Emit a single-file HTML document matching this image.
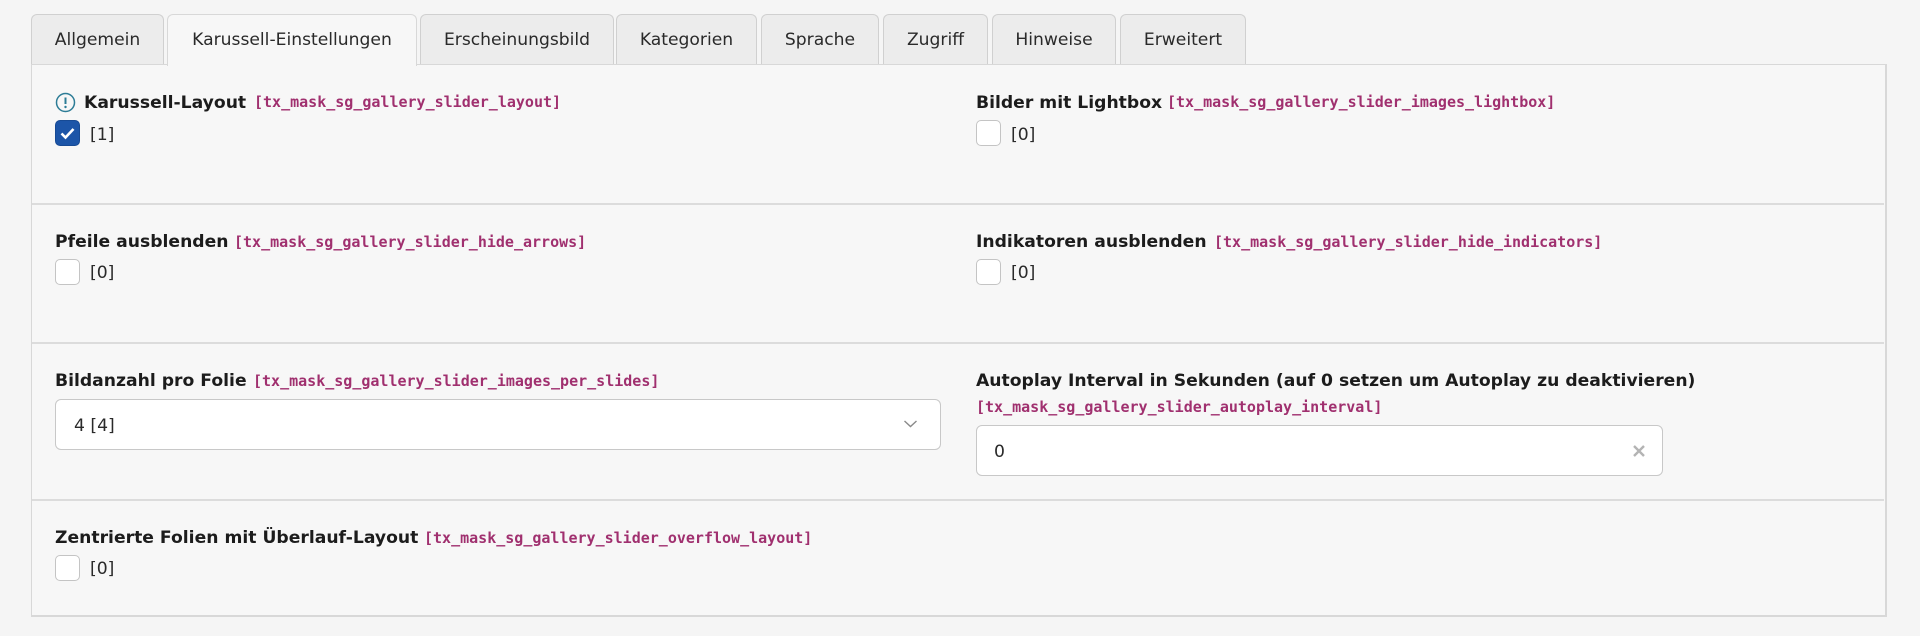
<!DOCTYPE html>
<html lang="de">
<head>
<meta charset="utf-8">
<title>Karussell-Einstellungen</title>
<style>
html,body{margin:0;padding:0;width:1920px;height:636px;overflow:hidden;background:#f5f5f5;}
body{position:relative;font-family:"DejaVu Sans","Liberation Sans",sans-serif;color:#1c1c1c;}
.abs,.tab,.line,.lab,.mono,.cb,.val{position:absolute;}
.panel{position:absolute;left:31px;top:64px;width:1853px;height:550px;background:#f7f7f7;border:1px solid #d8d8d8;border-width:1px 2px 2px 1px;box-sizing:content-box;}
.tab{top:14px;height:50px;box-sizing:border-box;background:#ececec;border:1.5px solid #d0d0d0;border-bottom:none;border-radius:6px 6px 0 0;text-align:center;font-size:17.15px;line-height:50px;color:#2a2a2a;white-space:nowrap;}
.tab.on{background:#f7f7f7;height:52px;z-index:3;border-color:#d8d8d8;}
.line{left:32px;width:1852px;height:2px;background:#dcdcdc;z-index:1;}
.lab{font-weight:bold;font-size:17.19px;line-height:20px;white-space:nowrap;color:#1c1c1c;z-index:2;}
.mono{font-family:"DejaVu Sans Mono","Liberation Mono",monospace;font-weight:bold;font-size:15px;line-height:20px;color:#a0306f;white-space:nowrap;z-index:2;}
.cb{width:25px;height:26px;box-sizing:border-box;background:#fff;border:1.5px solid #c4c4c4;border-radius:5px;z-index:2;}
.cb.on{background:#1c55a8;border-color:#174a94;}
.val{font-size:17.2px;line-height:20px;color:#2a2a2a;z-index:2;white-space:nowrap;}
.field{position:absolute;box-sizing:border-box;background:#fff;border:1.5px solid #c8c8c8;border-radius:6px;z-index:2;}
</style>
</head>
<body>
<div class="panel"></div>

<div class="tab" style="left:31px;width:133px">Allgemein</div>
<div class="tab on" style="left:167px;width:250px">Karussell-Einstellungen</div>
<div class="tab" style="left:420px;width:194px">Erscheinungsbild</div>
<div class="tab" style="left:616px;width:141px">Kategorien</div>
<div class="tab" style="left:761px;width:118px">Sprache</div>
<div class="tab" style="left:883px;width:105px">Zugriff</div>
<div class="tab" style="left:992px;width:124px">Hinweise</div>
<div class="tab" style="left:1120px;width:126px">Erweitert</div>

<div class="line" style="top:203px"></div>
<div class="line" style="top:342px"></div>
<div class="line" style="top:499px"></div>

<!-- Row 1 -->
<svg class="abs" style="left:55px;top:92px;z-index:2" width="21" height="21" viewBox="0 0 21 21"><circle cx="10.5" cy="10.5" r="9" fill="none" stroke="#2c7c96" stroke-width="1.5"/><path d="M10.5 5.5v6.5" stroke="#2c7c96" stroke-width="2" fill="none"/><circle cx="10.5" cy="15" r="1.2" fill="#2c7c96"/></svg>
<div class="lab" style="left:84px;top:93px">Karussell-Layout</div>
<div class="mono" style="left:254px;top:92px">[tx_mask_sg_gallery_slider_layout]</div>
<div class="cb on" style="left:55px;top:120px"></div>
<svg class="abs" style="left:55px;top:120px;z-index:3" width="25" height="26" viewBox="0 0 25 26"><path d="M6.5 13.5l4 4 8-8.5" fill="none" stroke="#fff" stroke-width="2.6"/></svg>
<div class="val" style="left:90px;top:125px">[1]</div>

<div class="lab" style="left:976px;top:93px">Bilder mit Lightbox</div>
<div class="mono" style="left:1167px;top:92px">[tx_mask_sg_gallery_slider_images_lightbox]</div>
<div class="cb" style="left:976px;top:120px"></div>
<div class="val" style="left:1011px;top:125px">[0]</div>

<!-- Row 2 -->
<div class="lab" style="left:55px;top:232px">Pfeile ausblenden</div>
<div class="mono" style="left:234px;top:232px">[tx_mask_sg_gallery_slider_hide_arrows]</div>
<div class="cb" style="left:55px;top:259px"></div>
<div class="val" style="left:90px;top:263px">[0]</div>

<div class="lab" style="left:976px;top:232px">Indikatoren ausblenden</div>
<div class="mono" style="left:1214px;top:232px">[tx_mask_sg_gallery_slider_hide_indicators]</div>
<div class="cb" style="left:976px;top:259px"></div>
<div class="val" style="left:1011px;top:263px">[0]</div>

<!-- Row 3 -->
<div class="lab" style="left:55px;top:371px">Bildanzahl pro Folie</div>
<div class="mono" style="left:253px;top:371px">[tx_mask_sg_gallery_slider_images_per_slides]</div>
<div class="field" style="left:55px;top:399px;width:886px;height:51px"></div>
<div class="val" style="left:74px;top:416px">4 [4]</div>
<svg class="abs" style="left:903px;top:418px;z-index:3" width="15" height="12" viewBox="0 0 15 12"><path d="M1.5 3l6 5.5 6-5.5" fill="none" stroke="#8a8a8a" stroke-width="1.4"/></svg>

<div class="lab" style="left:976px;top:371px">Autoplay Interval in Sekunden (auf 0 setzen um Autoplay zu deaktivieren)</div>
<div class="mono" style="left:976px;top:397px">[tx_mask_sg_gallery_slider_autoplay_interval]</div>
<div class="field" style="left:976px;top:425px;width:687px;height:51px"></div>
<div class="val" style="left:994px;top:442px">0</div>
<svg class="abs" style="left:1632px;top:444px;z-index:3" width="14" height="14" viewBox="0 0 14 14"><path d="M2 2l10 10M12 2L2 12" fill="none" stroke="#b4b4b4" stroke-width="2.4"/></svg>

<!-- Row 4 -->
<div class="lab" style="left:55px;top:528px">Zentrierte Folien mit Überlauf-Layout</div>
<div class="mono" style="left:424px;top:528px">[tx_mask_sg_gallery_slider_overflow_layout]</div>
<div class="cb" style="left:55px;top:555px"></div>
<div class="val" style="left:90px;top:559px">[0]</div>
</body>
</html>
